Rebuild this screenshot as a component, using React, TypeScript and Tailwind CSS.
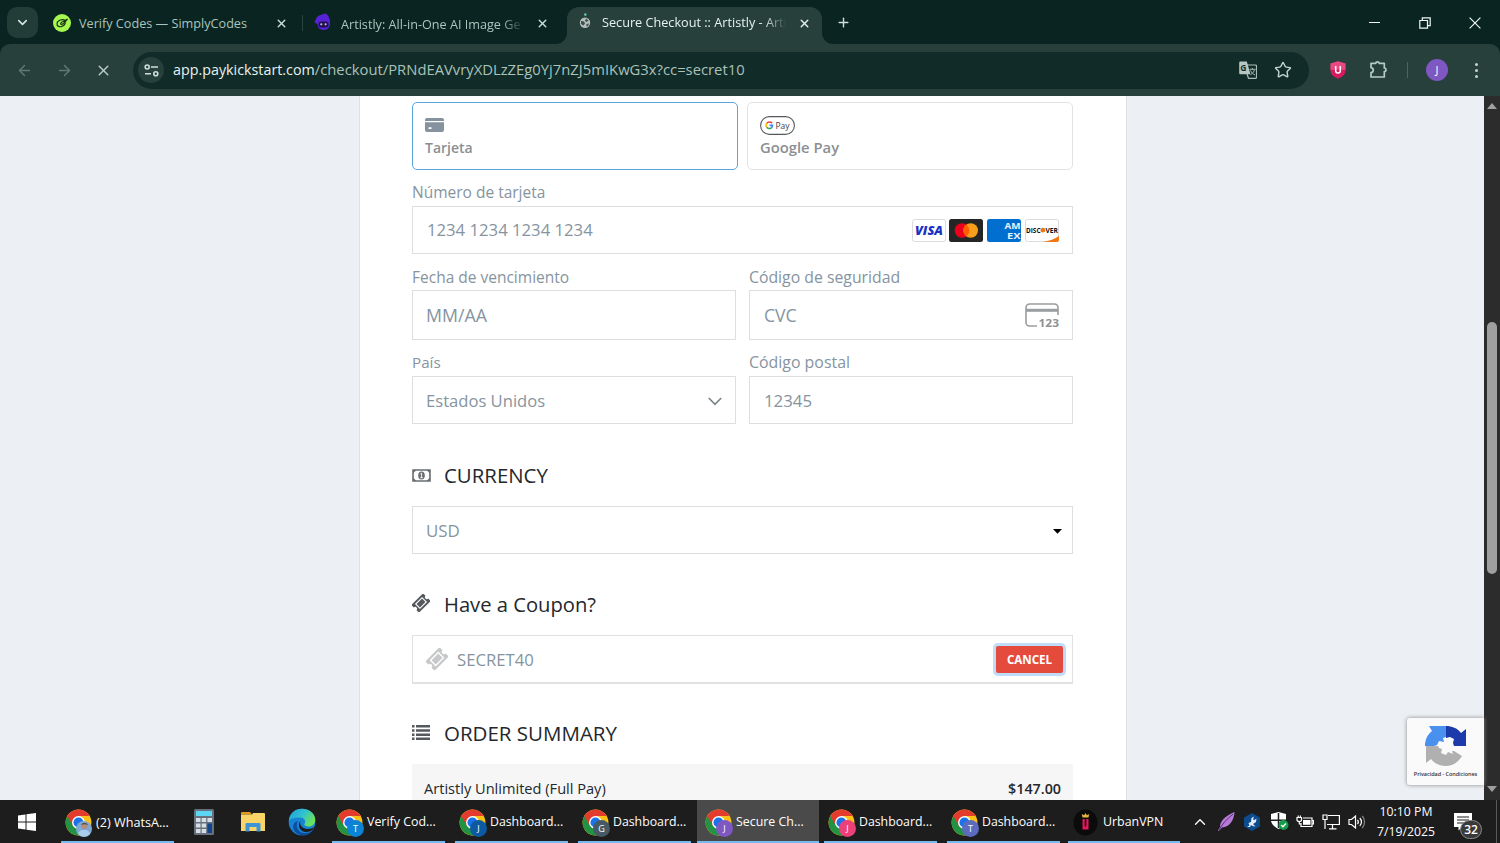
import React from 'react';
import { ArrowLeft, ArrowRight, ChevronDown, ChevronUp, Plus, Star, X } from 'lucide-react';

const tasks = [
  { label: 'Verify Cod...', letter: 'T', color: 'bg-[#0b84d6]', size: 'text-[12.4px]' },
  { label: 'Dashboard...', letter: 'J', color: 'bg-[#0b5aa2]', size: 'text-[12.3px]' },
  { label: 'Dashboard...', letter: 'G', color: 'bg-[#455a64]', size: 'text-[12.3px]' },
  { label: 'Secure Ch...', letter: 'J', color: 'bg-[#7e57c2]', size: 'text-[12.4px]', active: true },
  { label: 'Dashboard...', letter: 'J', color: 'bg-[#ec407a]', size: 'text-[12.3px]' },
  { label: 'Dashboard...', letter: 'T', color: 'bg-[#5c6bc0]', size: 'text-[12.3px]' },
];

function ChromeLogo() {
  return (
    <svg viewBox="0 0 48 48" className="w-[27px] h-[27px]">
      <circle cx="24" cy="24" r="23" fill="#fbc116" />
      <path d="M24 24 L4.1 12.5 A23 23 0 0 0 24 47 L34 29.7 Z" fill="#229342" />
      <path d="M4.1 12.5 A23 23 0 0 1 43.9 12.5 H24 V24 L14 29.7 Z" fill="#e33b2e" />
      <circle cx="24" cy="24" r="11.5" fill="#fff" />
      <circle cx="24" cy="24" r="9" fill="#1a73e8" />
    </svg>
  );
}

function TabStrip() {
  return (
    <div className="h-11 flex bg-[#0a2421] text-[#a9c6bd]">
      <div className="w-[31px] h-[31px] mt-[7px] ml-[7px] rounded-[10px] bg-[#223d38] flex items-center justify-center">
        <ChevronDown size={15} strokeWidth={2.5} className="text-[#d5e8e1]" />
      </div>
      <div className="w-[264px] pl-[15px] pr-[14px] flex items-center h-[46px]">
        <svg viewBox="0 0 18 18" className="w-[18px] h-[18px] shrink-0">
          <circle cx="9" cy="9" r="9" fill="#a6f750" />
          <path d="M14.500 5L12 6.500C10 4.800 4.500 6 4 9.500c-.4 3 3 3.800 5.200 2.800 2.500-1 3.500-3.300 2.800-4.300-.8-1-2.700-.6-3.800.6-.9 1-.5 2 .6 1.700C10.500 10 12 8 14.500 5z" fill="none" stroke="#173516" strokeWidth="1.200" />
        </svg>
        <span className="ml-2 mt-px text-[12.650px] flex-1 whitespace-nowrap">Verify Codes — SimplyCodes</span>
        <X size={13} strokeWidth={2.6} className="text-[#c9ddd6]" />
      </div>
      <div className="w-px h-4 mt-[15px] bg-[#28423d]" />
      <div className="w-[264px] h-[46px] pl-[11px] pr-[18px] flex items-center">
        <svg viewBox="0 0 17 18" className="w-[17px] h-[18px] shrink-0 -mt-[2px]">
          <path d="M.5 9C2 7 2 4 5 2.500L11 .500C14 1 15.500 5 16 8v4c-1 3-3 5-6.500 5C6 17 3.500 14.500 3.500 11 2.500 10.500 1 10 .500 9z" fill="#5522d6" />
          <rect x="4.500" y="8.500" width="10" height="6" rx="3" fill="#20114c" />
          <circle cx="7.300" cy="11.300" r="1.100" fill="#c3b4f4" />
          <circle cx="11.600" cy="11.300" r="1.100" fill="#c3b4f4" />
        </svg>
        <span className="ml-[10px] mt-[2px] w-[183px] shrink-0 overflow-hidden whitespace-nowrap text-[12.650px] [mask-image:linear-gradient(to_right,#000_88%,transparent)]">
          Artistly: All-in-One AI Image Ge
        </span>
        <X size={13} strokeWidth={2.600} className="ml-[12px] shrink-0 text-[#c9ddd6]" />
      </div>
      <div className="relative w-[255px] h-[37px] mt-[7px] rounded-t-[12px] bg-[#28403c] text-[#e6f2ee] flex items-center pb-[5px]">
        <svg viewBox="0 0 11 11" className="absolute -left-[11px] bottom-0 w-[11px] h-[11px]"><path d="M11 0v11H0C6 11 11 6 11 0z" fill="#28403c" /></svg>
        <svg viewBox="0 0 11 11" className="absolute -right-[11px] bottom-0 w-[11px] h-[11px]"><path d="M0 0v11h11C5 11 0 6 0 0z" fill="#28403c" /></svg>
        <svg viewBox="0 0 12 16" className="w-[12px] h-[16px] ml-3 -mt-1 shrink-0">
          <circle cx="6.300" cy="1.600" r="1.300" fill="#62c4ae" />
          <circle cx="6" cy="9.800" r="5.200" fill="#b5bdba" />
          <path d="M2 8l3 .5 1 2-1.500 2-2.500-1.500zM7 5.500l2.500 2-2 1.500-1.500-1zM7.500 11l2.500-.5-1 2.500-1.500.5z" fill="#3c4f4b" />
        </svg>
        <span className="ml-[11px] w-[184px] shrink-0 overflow-hidden whitespace-nowrap text-[12.680px] [mask-image:linear-gradient(to_right,#000_88%,transparent)]">
          Secure Checkout :: Artistly - Arti
        </span>
        <X size={13} strokeWidth={2.600} className="ml-3 shrink-0" />
      </div>
      <div className="ml-[14px] h-[45px] flex items-center flex-1"><Plus size={15} strokeWidth={2.200} className="text-[#cfe0da]" /></div>
      <div className="flex h-[45px] items-center text-[#eef5f3]">
        <div className="w-[50px] flex justify-center"><div className="w-[11px] h-px bg-[#eef5f3]" /></div>
        <div className="w-[51px] flex justify-center">
          <svg viewBox="0 0 12 12" className="w-3 h-3" fill="none" stroke="currentColor" strokeWidth="1.200"><path d="M.8 3.500h7.700v7.700H.8zM3.300 3.200V.8h7.900v7.900H8.700" /></svg>
        </div>
        <div className="w-[50px] flex justify-center">
          <svg viewBox="0 0 12 12" className="w-3 h-3" stroke="currentColor" strokeWidth="1.200"><path d="M.6.6l10.800 10.800M11.400.6L.6 11.400" /></svg>
        </div>
      </div>
    </div>
  );
}

function Toolbar() {
  return (
    <div className="bg-[#0a2421]">
      <div className="h-[52px] rounded-t-[10px] bg-[#28403c] flex items-center text-[#b4cbc4]">
        <ArrowLeft size={17} strokeWidth={2} className="ml-[16px] text-[#5f7972]" />
        <ArrowRight size={17} strokeWidth={2} className="ml-[23px] text-[#5f7972]" />
        <X size={17} strokeWidth={2} className="ml-[22px] text-[#b9cdc7]" />
        <div className="ml-[21px] w-[1176px] h-[37px] rounded-full bg-[#112b28] flex items-center pl-[5px]">
          <div className="w-[26px] h-[26px] rounded-full bg-[#28403c] flex items-center justify-center">
            <svg viewBox="0 0 15 13" className="w-[15px] h-[13px]" fill="none" stroke="#cfe0da" strokeWidth="1.600">
              <circle cx="3.200" cy="3" r="2" /><path d="M7 3h7M1 9.800h6" /><circle cx="11.800" cy="9.800" r="2" />
            </svg>
          </div>
          <div className="ml-[9px] -mt-[2px] flex-1 whitespace-nowrap">
            <span className="text-[14.3px] text-[#e8f2ef]">app.paykickstart.com</span>
            <span className="text-[14.800px] text-[#a9c2ba]">/checkout/PRNdEAVvryXDLzZEg0Yj7nZJ5mIKwG3x?cc=secret10</span>
          </div>
          <svg viewBox="0 0 18 18" className="w-[18px] h-[18px] font-['Open_Sans',sans-serif]">
            <path d="M8 4h8.500a1 1 0 0 1 1 1v11.300a1 1 0 0 1-1 1H9.500L8 13" fill="none" stroke="#a9bdb7" strokeWidth="1.200" />
            <path d="M10.500 8.300h6M13.300 7v1.300M15.500 8.500c-.6 2.500-2 4.200-4 5.200M11.500 9.500c1 2 2.500 3.500 4.500 4.500" fill="none" stroke="#a9bdb7" />
            <path d="M1.200.5h6.600l3.700 12.800H1.200a1 1 0 0 1-1-1V1.500a1 1 0 0 1 1-1z" fill="#b7c6c1" />
            <text x="1.300" y="10.200" fontSize="8.500" fontWeight="700" fill="#112b28">G</text>
          </svg>
          <Star size={18} strokeWidth={1.900} className="ml-[17px] mr-[17px] text-[#c3d5cf]" />
        </div>
        <svg viewBox="0 0 16 18" className="ml-[21px] w-4 h-[18px]">
          <path d="M8 .3l7.500 2.200v7c0 4-3.500 6.600-7.500 8.300C4 16.100.5 13.500.5 9.500v-7z" fill="#d81b60" />
          <path d="M8 .3l7.500 2.200v6.200H.5V2.500z" fill="#f06292" opacity=".65" />
          <path d="M5.700 5v4.700a2.300 2.300 0 0 0 4.600 0V5" fill="none" stroke="#fff" strokeWidth="1.500" />
        </svg>
        <svg viewBox="0 0 19 19" className="ml-[23px] w-[19px] h-[19px] -mt-px" fill="none" stroke="#b4cbc4" strokeWidth="1.700" strokeLinejoin="round">
          <path d="M2 3.300H6.800C6.800 1.300 10.200 1.300 10.200 3.300H15.300V8C17.500 8 17.500 11.500 15.300 11.500V17H2V12.700C5 12.200 5 8.200 2 7.700z" />
        </svg>
        <div className="ml-[19px] w-px h-4 bg-[#4c655f]" />
        <div className="ml-[18px] w-[22px] h-[22px] rounded-full bg-[#7e57c2] text-white text-[11px] flex items-center justify-center">J</div>
        <div className="ml-[27px] flex flex-col gap-[3px]">
          <div className="w-[3px] h-[3px] rounded-full bg-[#c3d5cf]" />
          <div className="w-[3px] h-[3px] rounded-full bg-[#c3d5cf]" />
          <div className="w-[3px] h-[3px] rounded-full bg-[#c3d5cf]" />
        </div>
      </div>
    </div>
  );
}

function CardBrands() {
  return (
    <div className="flex gap-[3.600px] font-['Open_Sans',sans-serif]">
      <svg viewBox="0 0 34 23" className="w-[34px] h-[23px]">
        <rect x=".5" y=".5" width="33" height="22" rx="2" fill="#fff" stroke="#dcdcdc" />
        <text x="3" y="16.300" fontSize="13" fontWeight="800" fontStyle="italic" fill="#1a2fc4" textLength="28" lengthAdjust="spacingAndGlyphs">VISA</text>
      </svg>
      <svg viewBox="0 0 34 23" className="w-[34px] h-[23px] -ml-[.4px] mr-[.4px]">
        <rect width="34" height="23" rx="2.500" fill="#252525" />
        <circle cx="13" cy="11.500" r="7.300" fill="#eb001b" />
        <circle cx="21.700" cy="11.500" r="7.300" fill="#f79e1b" />
        <path d="M17.350 5.600a7.300 7.300 0 0 1 0 11.800a7.300 7.300 0 0 1 0-11.800z" fill="#ff5f00" />
      </svg>
      <svg viewBox="0 0 34 23" className="w-[34px] h-[23px]">
        <rect width="34" height="23" rx="2.500" fill="#016fd0" />
        <text x="17.500" y="10.300" fontSize="8.500" fontWeight="700" fill="#e6f2fc" textLength="16" lengthAdjust="spacingAndGlyphs">AM</text>
        <text x="20" y="19.600" fontSize="8.500" fontWeight="700" fill="#e6f2fc" textLength="13.500" lengthAdjust="spacingAndGlyphs">EX</text>
      </svg>
      <svg viewBox="0 0 34 23" className="w-[34px] h-[23px]">
        <rect x=".5" y=".5" width="33" height="22" rx="2" fill="#fff" stroke="#dcdcdc" />
        <path d="M34 17v4a2 2 0 0 1-2 2H18c6-1 12-3 16-6z" fill="#f27712" />
        <text x="1" y="13.700" fontSize="6.800" fontWeight="700" fill="#111" textLength="14.500" lengthAdjust="spacingAndGlyphs">DISC</text>
        <circle cx="17.900" cy="11.200" r="2.400" fill="#f27712" />
        <text x="20.500" y="13.700" fontSize="6.800" fontWeight="700" fill="#111" textLength="12.500" lengthAdjust="spacingAndGlyphs">VER</text>
      </svg>
    </div>
  );
}

function Ticket({ className }: { className: string }) {
  return (
    <svg viewBox="0 0 24 24" className={className} fill="currentColor">
      <g transform="rotate(-45 12 12)">
        <path fillRule="evenodd" d="M1 4.800h22v4.700a2.500 2.500 0 0 0 0 5v4.700H1v-4.700a2.500 2.500 0 0 0 0-5zM5.300 7.300v9.400h13.400V7.300z" />
        <rect x="6.800" y="8.800" width="10.400" height="6.400" />
      </g>
    </svg>
  );
}

function Checkout() {
  return (
    <main className="w-[768px] ml-[359px] border-x border-[#dde1e5] bg-white pl-[52px] pr-[53px] pt-[6px] text-[#8694a0]">
      <div className="flex gap-[9px]">
        <div className="w-[326px] h-[68px] rounded-[5px] border border-[#58a7dc] pt-[15px] pl-[12px]">
          <svg viewBox="0 0 19 14" className="w-[19px] h-[14px]" fill="#84939f">
            <path d="M2 0h15a2 2 0 0 1 2 1.500V3H0V1.500A2 2 0 0 1 2 0z" />
            <path fillRule="evenodd" d="M0 4.300h19V12a2 2 0 0 1-2 2H2a2 2 0 0 1-2-2zM3.500 9.300v1.700h3V9.300z" />
          </svg>
          <div className="mt-[6px] leading-[20px] text-[14px] font-semibold text-[#8b8f93]">Tarjeta</div>
        </div>
        <div className="w-[326px] h-[68px] rounded-[5px] border border-[#e3e3e3] pt-[13px] pl-[12px]">
          <svg viewBox="0 0 35 19" className="w-[35px] h-[19px] font-['Open_Sans',sans-serif]" fill="none">
            <rect x=".6" y=".6" width="33.800" height="17.800" rx="8.900" fill="#fff" stroke="#55585c" strokeWidth="1.100" />
            <g strokeWidth="1.600">
              <path d="M12 7.200A3.300 3.300 0 0 0 6.800 7.400" stroke="#ea4335" />
              <path d="M6.800 7.300a3.300 3.300 0 0 0 0 4" stroke="#fbbc04" />
              <path d="M6.700 11.200a3.300 3.300 0 0 0 4.700.6" stroke="#34a853" />
              <path d="M11.300 11.900a3.300 3.300 0 0 0 1.200-2.500H9.600" stroke="#4285f4" />
            </g>
            <text x="15.500" y="12.700" fontSize="9.500" fontWeight="500" fill="#3c4043" textLength="14" lengthAdjust="spacingAndGlyphs">Pay</text>
          </svg>
          <div className="mt-[2px] leading-[20px] text-[14.800px] font-semibold text-[#8b8f93]">Google Pay</div>
        </div>
      </div>

      <div className="h-[36px] flex items-center pt-[10px] text-[15.500px]">Número de tarjeta</div>
      <div className="h-[48px] border border-[#dcdfe1] flex items-center justify-between pl-[14px] pr-[13px] text-[16.700px]">
        <span>1234 1234 1234 1234</span>
        <CardBrands />
      </div>

      <div className="flex gap-[13px]">
        <div className="w-[324px]">
          <div className="h-[36px] flex items-center pt-[11px] text-[15.500px]">Fecha de vencimiento</div>
          <div className="h-[50px] border border-[#dcdfe1] flex items-center pl-[13px] text-[17.800px]">MM/AA</div>
          <div className="h-[36px] flex items-center pt-[9px] text-[15.200px]">País</div>
          <div className="h-[48px] border border-[#dcdfe1] flex items-center justify-between pl-[13px] pr-[13px] pt-[2px] text-[16.600px]">
            <span>Estados Unidos</span>
            <svg viewBox="0 0 14 9" className="w-[14px] h-[9px]" fill="none" stroke="#7d8488" strokeWidth="1.700"><path d="M.8 1l6.200 6.300L13.200 1" /></svg>
          </div>
        </div>
        <div className="w-[324px]">
          <div className="h-[36px] flex items-center pt-[11px] text-[15.800px]">Código de seguridad</div>
          <div className="h-[50px] border border-[#dcdfe1] flex items-center justify-between pl-[14px] pr-[13px] text-[17.600px]">
            <span>CVC</span>
            <svg viewBox="0 0 34 25" className="w-[34px] h-[25px] overflow-visible font-['Open_Sans',sans-serif]">
              <path d="M12 23H4.500A3.500 3.500 0 0 1 1 19.500v-15A3.500 3.500 0 0 1 4.500 1h25A3.500 3.500 0 0 1 33 4.500V12" fill="none" stroke="#9a9da0" strokeWidth="1.600" />
              <path d="M1 7.300h32" stroke="#9a9da0" strokeWidth="3" />
              <text x="13.500" y="23.800" fontSize="11" fontWeight="700" fill="#8f9295" textLength="20.500" lengthAdjust="spacingAndGlyphs">123</text>
            </svg>
          </div>
          <div className="h-[36px] flex items-center pt-[10px] text-[15.900px]">Código postal</div>
          <div className="h-[48px] border border-[#dcdfe1] flex items-center pl-[14px] pt-px text-[16.800px]">12345</div>
        </div>
      </div>

      <div className="h-[82px] flex items-center pt-[20px] text-[20.400px] text-[#24282c]">
        <svg viewBox="0 0 19 13" className="w-[19px] h-[13px] mr-[13px]">
          <path d="M1 1h17v11H1z" fill="none" stroke="#6a6e71" strokeWidth="1.600" />
          <path d="M1 1h3.500L1 4.500zM18 1h-3.500L18 4.500zM1 12h3.500L1 8.500zM18 12h-3.500L18 8.500z" fill="#6a6e71" />
          <ellipse cx="9.500" cy="6.500" rx="3.300" ry="3.900" fill="#6a6e71" />
          <path d="M8.300 5l1.300-.9v4.500M8.200 8.700h2.700" fill="none" stroke="#fff" strokeWidth=".9" />
        </svg>
        CURRENCY
      </div>
      <div className="h-[48px] border border-[#dcdfe1] flex items-center justify-between pl-[13px] pr-[10px] pt-[2px] text-[16.900px]">
        <span>USD</span>
        <svg viewBox="0 0 9 5" className="w-[9px] h-[5px]"><path d="M0 0h9L4.500 4.800z" fill="#000" /></svg>
      </div>

      <div className="h-[81px] flex items-center pt-[20px] text-[20.200px] text-[#24282c]">
        <Ticket className="w-[18px] h-[18px] mr-[14px] -mt-[3px] text-[#55595d]" />
        Have a Coupon?
      </div>
      <div className="h-[49px] border border-b-2 border-[#dfe1e2] flex items-center pl-[13px] pr-[9px] text-[16.700px]">
        <Ticket className="w-[22px] h-[22px] mr-[9px] -mt-px text-[#c6c8c9]" />
        <span className="flex-1 pt-[2px]">SECRET40</span>
        <button className="w-[67px] h-[27px] rounded-[2px] bg-[#e54b3d] ring-3 ring-[#bfdcfa] text-white text-[11.600px] font-bold pt-px">CANCEL</button>
      </div>

      <div className="h-[80px] flex items-center pt-[18px] text-[20.500px] text-[#24282c]">
        <svg viewBox="0 0 18 15" className="w-[18px] h-[15px] mr-[14px] -mt-px" fill="#55595d">
          <path d="M0 0h2.500v2.500H0zM4 0h14v2.500H4zM0 4.200h2.500v2.500H0zM4 4.200h14v2.500H4zM0 8.400h2.500v2.500H0zM4 8.400h14v2.500H4zM0 12.500h2.500V15H0zM4 12.500h14V15H4z" />
        </svg>
        ORDER SUMMARY
      </div>
      <div className="h-[48px] bg-[#f6f6f6] flex items-center justify-between px-[12px] pt-[2px] text-[14.600px] text-[#24282c]">
        <span>Artistly Unlimited (Full Pay)</span>
        <span className="text-[14.300px] font-semibold">$147.00</span>
      </div>
    </main>
  );
}

function Recaptcha() {
  return (
    <div className="absolute right-[16px] bottom-[15px] w-[77px] h-[67px] rounded-l-[3px] bg-[#fafafa] shadow-[0_0_4px_#888] flex flex-col items-center pt-[7px]">
      <svg viewBox="0 0 42 42" className="w-[42px] h-[42px]">
        <path d="M0 21C0 14 3 9 7 6L4 1h17v11l-3 1 1 4-5-1-2 4-3 1z" fill="#4a90ee" />
        <path d="M21 1c6 0 11 2 15 7l5-4v17H29l-1-3 1-4-4-2-4 1z" fill="#1c3aa9" />
        <path d="M1 21h12l1 2 3 1-1 4 5 2 2-3 5 2-1-3h2l8 5c-4 7-10 10-16 10-6 0-11-2-15-7l-5 4z" fill="#b0b0b0" />
      </svg>
      <div className="mt-[3px] text-[5.500px] leading-[8px] font-semibold tracking-[-0.01em] text-[#333] whitespace-nowrap">Privacidad - Condiciones</div>
    </div>
  );
}

function Taskbar() {
  return (
    <div className="h-[43px] bg-[#1d1d1d] text-white flex items-center">
      <svg viewBox="0 0 18 18" className="ml-[18px] w-[18px] h-[18px] shrink-0" fill="#fff">
        <path d="M0 2.500l7.500-1v7H0zM8.500 1.300L18 0v8.500H8.500zM0 9.500h7.500v7L0 15.500zM8.500 9.500H18V18l-9.500-1.300z" />
      </svg>
      <div className="ml-[25px] w-[113px] h-full border-b-[2px] border-[#76b9ed] flex items-center pl-[4px] pt-[3px]">
        <div className="relative">
          <ChromeLogo />
          <svg viewBox="0 0 16 16" className="absolute left-[11px] top-[12px] w-4 h-4">
            <circle cx="8" cy="8" r="8" fill="#7fa9d2" />
            <path d="M2 13c2-5 4-4 6-4s5 0 6 4a8 8 0 0 1-12 0z" fill="#a9cdea" />
            <circle cx="8.500" cy="5" r="3" fill="#b08d7c" />
            <path d="M5 4c1-3 6-3 7 0-2-1-5-1-7 0z" fill="#55504e" />
          </svg>
        </div>
        <span className="ml-[4px] text-[12.650px] whitespace-nowrap">(2) WhatsA...</span>
      </div>
      <svg viewBox="0 0 20 26" className="ml-[20px] w-5 h-[26px] shrink-0">
        <rect width="20" height="26" rx="1.500" fill="#66717d" />
        <rect x="2" y="2" width="16" height="5" fill="#5cd6f2" />
        <path d="M2 9h4.500v4H2zM7.700 9h4.500v4H7.700zM13.400 9H18v4h-4.600zM2 14.500h4.500v4H2zM7.700 14.500h4.500v4H7.700zM2 20h4.500v4H2zM7.700 20h4.500v4H7.700z" fill="#d6dde4" />
        <path d="M13.400 14.500H18V24h-4.600z" fill="#12448a" />
      </svg>
      <svg viewBox="0 0 24 20" className="ml-[27px] w-6 h-5 shrink-0">
        <path d="M0 1a1 1 0 0 1 1-1h8l2 2.500H0z" fill="#dd9b19" />
        <path d="M0 2.500h11L12 1h11a1 1 0 0 1 1 1v17H0z" fill="#fbd467" />
        <path d="M4.500 19.500V12a1 1 0 0 1 1-1h13a1 1 0 0 1 1 1v7.500h-4V15h-7v4.500z" fill="#3d95d8" />
      </svg>
      <svg viewBox="0 0 28 28" className="ml-[23px] w-7 h-7 shrink-0">
        <defs>
          <linearGradient id="edge" x1="0" y1="0" x2="1" y2=".5"><stop offset="0" stopColor="#219bdb" /><stop offset=".55" stopColor="#2fc2d1" /><stop offset="1" stopColor="#6be05a" /></linearGradient>
        </defs>
        <circle cx="14" cy="14" r="13.300" fill="#1683d4" />
        <path d="M.8 13C1.500 5 7 .7 14 .7c8 0 13.300 5.300 13.300 11.300 0 4-3 6.500-6.500 6.500-3 0-5-1-4.500-2.500 2-2 .5-6.500-4-6.500C7 9.500 3 10 .8 13z" fill="url(#edge)" />
        <path d="M10 13c-3 5 0 12 7 12 3.500 0 6-1 8-3.500-3 6-10 7-15 4.500C3 22 4 14 10 13z" fill="#0d4f9e" />
        <path d="M12.500 13c-1.500 4 2 8 7 8 3 0 5-1 6.500-2-1.500 4-5 5.500-9 5-5-.7-8-7-4.500-11z" fill="#1d1d1d" />
      </svg>
      <div className="ml-[11px] flex h-full">
        {tasks.map((t, i) => (
          <div key={i} className={t.active ? 'w-[122px] h-full ml-px bg-[#4a4a4a] border-b-[2px] border-[#76b9ed]' : 'w-[123px] h-full px-[5px]'}>
            <div className={t.active ? 'h-full flex items-center pl-[8px] pt-[3px]' : 'h-full border-b-[2px] border-[#76b9ed] flex items-center pl-[4px] pt-[3px]'}>
              <div className="relative shrink-0">
                <ChromeLogo />
                <div className={`absolute left-[11px] top-[11px] w-[17px] h-[17px] rounded-full text-[9px] leading-[17px] text-center ${t.color}`}>{t.letter}</div>
              </div>
              <span className={`ml-[4px] whitespace-nowrap ${t.size}`}>{t.label}</span>
            </div>
          </div>
        ))}
      </div>
      <div className="ml-[3px] w-[112px] h-full border-b-[2px] border-[#76b9ed] flex items-center pl-[5px] pt-[3px]">
        <svg viewBox="0 0 25 27" className="w-[25px] h-[27px]">
          <ellipse cx="12.500" cy="13.500" rx="12" ry="13" fill="#0b0b0b" />
          <path d="M9.500 8.500L8.800 5l2.300 1.300 1.400-2.300L13.900 6.300 16.200 5l-.7 3.500z" fill="#e6b23a" />
          <path d="M9.500 10h2.200v7.500h1.600V10h2.200v10.500h-6z" fill="#e5175f" />
        </svg>
        <span className="ml-[5px] text-[12.400px]">UrbanVPN</span>
      </div>
      <ChevronUp size={18} strokeWidth={1.700} className="ml-[11px] shrink-0" />
      <svg viewBox="0 0 17 19" className="ml-[9px] w-[17px] h-[19px] shrink-0">
        <path d="M0 18.500L2 15C2 9 7 4 16.500 0 16 8 12 15 4 15.500L.8 19z" fill="#b57ad6" />
        <path d="M1 18C4 12 9 7 15 2" stroke="#5c2d82" fill="none" />
      </svg>
      <svg viewBox="0 0 16 18" className="ml-[9px] w-4 h-[18px] shrink-0">
        <path d="M8 0l8 4.500v9L8 18l-8-4.500v-9z" fill="#0c4b8c" />
        <path d="M3 14l2.500-1.500L4.500 10 7 9l.5-4L10 3.500 9 6.500l1.500.5 2-1.500-.5 3.500-3 2 2.500 2.500-3-.5L7 12l-1 2z" fill="#e3eefa" />
      </svg>
      <svg viewBox="0 0 18 19" className="ml-[11px] w-[18px] h-[19px] shrink-0">
        <path d="M7.500 0l7.500 2v6c0 4-3.500 7-7.500 9C3.500 15 0 12 0 8V2z" fill="#fff" />
        <path d="M7.500 1v15M0 8.300h15" stroke="#1d1d1d" strokeWidth="1.500" />
        <circle cx="12.500" cy="13" r="5" fill="#169b4c" />
        <path d="M10.200 13l1.700 1.700 3-3.200" stroke="#fff" strokeWidth="1.300" fill="none" />
      </svg>
      <svg viewBox="0 0 18 14" className="ml-[7px] w-[18px] h-[14px] shrink-0" fill="none" stroke="#fff" strokeWidth="1.200">
        <path d="M7 3H16V11.500H5V8M16.500 5.500h1v3.500h-1M1 2.500h4.500V5c0 2-4.500 2-4.500 0zM2.200.5v2M4.400.5v2M3.300 6.500V9H5" />
        <path d="M7 5h7.500v4.800H7z" fill="#fff" stroke="none" />
      </svg>
      <svg viewBox="0 0 18 16" className="ml-[8px] w-[18px] h-4 shrink-0" fill="none" stroke="#fff" strokeWidth="1.200">
        <path d="M6 1.500h11.400v9H5M1 1h4v4.500H1zM3 5.500V15M10.500 10.500v4M7 14.800h7.500" />
      </svg>
      <svg viewBox="0 0 18 16" className="ml-[8px] w-[18px] h-4 shrink-0" fill="none" stroke="#fff" strokeWidth="1.200">
        <path d="M1 5.500h2.500L7.500 2v12L3.500 10.500H1zM9.500 5.800c1 1.300 1 3 0 4.300M11.800 4c2 2.300 2 5.500 0 8" />
        <path d="M14.300 2c3 3.500 3 8.500 0 12" stroke="#888" />
      </svg>
      <div className="ml-[9px] w-[62px] text-center text-[12.250px] leading-[20px] whitespace-nowrap">
        <div>10:10 PM</div>
        <div>7/19/2025</div>
      </div>
      <div className="relative ml-[17px] shrink-0">
        <svg viewBox="0 0 18 18" className="w-[18px] h-[18px]">
          <path d="M0 0h18v14H8l-3.500 3.500V14H0z" fill="#fff" />
          <path d="M3 4h12M3 7h12M3 10h8" stroke="#1d1d1d" strokeWidth="1.200" />
        </svg>
        <div className="absolute left-[6px] top-[7px] w-[22px] h-[19px] rounded-full bg-[#3a3a3a] border border-[#8a8a8a] text-[12px] leading-[17px] text-center font-semibold">32</div>
      </div>
      <div className="ml-auto mr-[3px] w-px h-full bg-[#5a5a5a]" />
    </div>
  );
}

function App() {
  return (
    <div className="w-[1500px] h-[843px] overflow-hidden flex flex-col font-['Open_Sans',sans-serif]">
      <TabStrip />
      <Toolbar />
      <div className="relative h-[704px] flex overflow-hidden bg-[#ecf0f4]">
        <div className="flex-1"><Checkout /></div>
        <Recaptcha />
        <div className="w-4 bg-[#2c2c2c] flex flex-col items-center">
          <svg viewBox="0 0 10 6" className="mt-[7px] w-[10px] h-[6px]"><path d="M5 0l5 6H0z" fill="#9f9f9f" /></svg>
          <div className="mt-[213px] w-[10px] h-[252px] rounded-full bg-[#9f9f9f]" />
          <svg viewBox="0 0 10 6" className="mt-auto mb-[8px] w-[10px] h-[6px]"><path d="M5 6l5-6H0z" fill="#9f9f9f" /></svg>
        </div>
      </div>
      <Taskbar />
    </div>
  );
}

export default App;
